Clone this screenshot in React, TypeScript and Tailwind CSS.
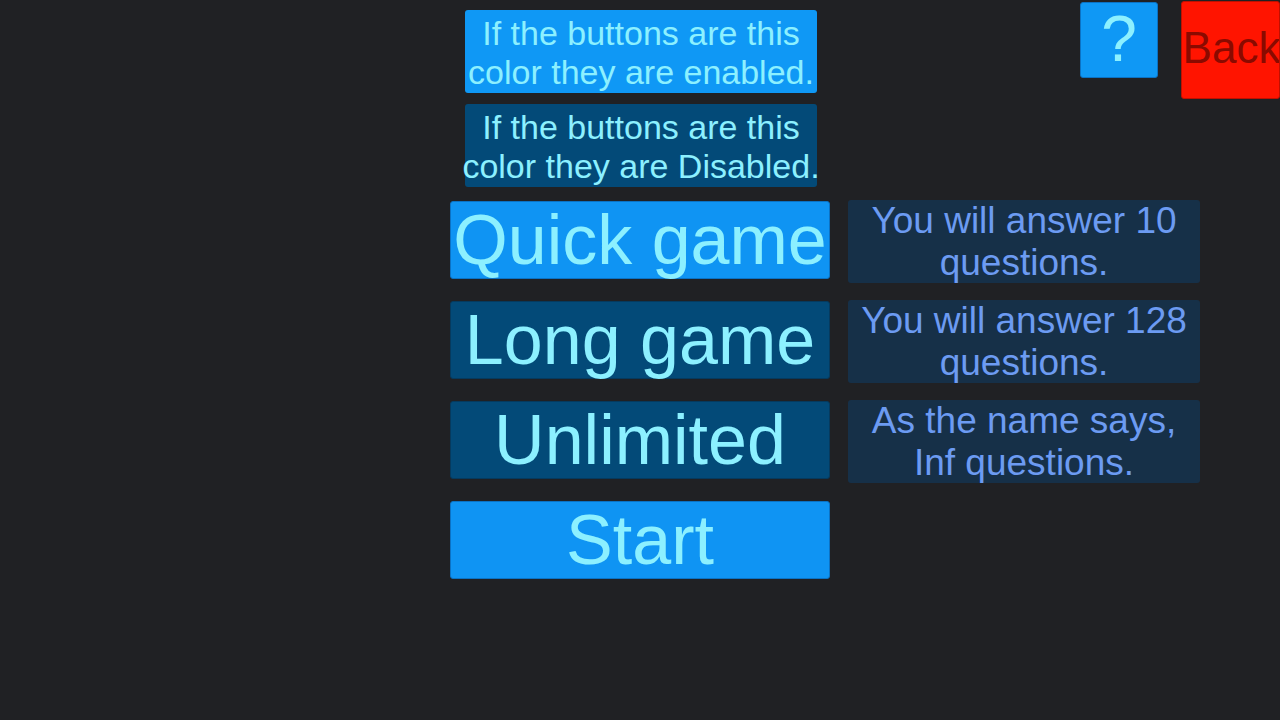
const FONT = { fontFamily: '"Liberation Sans", Arial, sans-serif' };

const modes = [
  { label: "Quick game", info: ["You will answer 10", "questions."], enabled: true },
  { label: "Long game", info: ["You will answer 128", "questions."], enabled: false },
  { label: "Unlimited", info: ["As the name says,", "Inf questions."], enabled: false },
];

function InfoBox({ enabled, lines }: { enabled: boolean; lines: string[] }) {
  return (
    <div
      className={`flex h-[83px] w-[352px] flex-col items-center justify-center rounded-[3px] pt-[2px] text-[34px] leading-[39px] whitespace-nowrap text-[#8cf0ff] ${
        enabled ? "bg-[#0f98f5]" : "bg-[#034a78]"
      }`}
    >
      {lines.map((l) => (
        <span key={l}>{l}</span>
      ))}
    </div>
  );
}

function BigButton({ label, enabled }: { label: string; enabled: boolean }) {
  return (
    <button
      className={`mt-[1px] flex h-[78px] w-[380px] items-center justify-center rounded-[3px] border text-[70px] leading-[78px] whitespace-nowrap text-[#8cf0ff] ${
        enabled ? "border-[#0b72c4] bg-[#0f94f3]" : "border-[#063a5e] bg-[#034a78]"
      }`}
    >
      {label}
    </button>
  );
}

export default function App() {
  return (
    <div className="h-[720px] w-[1280px] overflow-hidden bg-[#202124]" style={FONT}>
      {/* top: legend + corner buttons */}
      <div className="flex h-[200px] items-start">
        <div className="ml-[465px] mt-[10px] flex flex-col gap-[11px]">
          <InfoBox enabled lines={["If the buttons are this", "color they are enabled."]} />
          <InfoBox enabled={false} lines={["If the buttons are this", "color they are Disabled."]} />
        </div>
        <div className="ml-auto flex items-start gap-[23px]">
          <button className="mt-[2px] flex h-[76px] w-[78px] items-center justify-center rounded-[3px] border border-[#0b72c4] bg-[#0f98f5] text-[64px] leading-none text-[#8cf0ff]">
            <span className="-mt-[3px]">?</span>
          </button>
          <button className="mt-[1px] flex h-[98px] w-[99px] items-center justify-center overflow-hidden rounded-[3px] border border-[#c01000] bg-[#ff1400] text-[44px] leading-none text-[#8a0a00]">
            <span className="-mt-[4px] pl-[2px]">Back</span>
          </button>
        </div>
      </div>

      {/* mode rows */}
      <div className="ml-[450px] flex flex-col gap-[17px]">
        {modes.map((m) => (
          <div key={m.label} className="flex h-[83px] items-start gap-[18px]">
            <BigButton label={m.label} enabled={m.enabled} />
            <div className="flex h-[83px] w-[352px] flex-col items-center justify-center rounded-[3px] bg-[#163048] text-[37px] leading-[42px] whitespace-nowrap text-[#6c9bf2]">
              {m.info.map((l) => (
                <span key={l}>{l}</span>
              ))}
            </div>
          </div>
        ))}
        <div className="flex h-[83px] items-start">
          <BigButton label="Start" enabled />
        </div>
      </div>
    </div>
  );
}
